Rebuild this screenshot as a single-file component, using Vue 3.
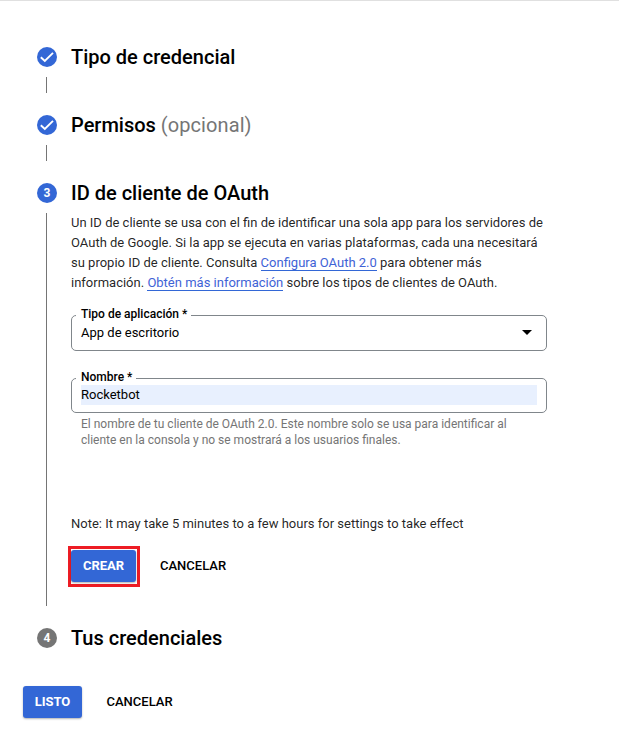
<script setup>
const doneSteps = [
  { title: 'Tipo de credencial', note: '' },
  { title: 'Permisos', note: '(opcional)' },
]
</script>

<template>
  <main class="page">
    <section v-for="step in doneSteps" :key="step.title" class="step">
      <header class="head">
        <svg class="mark" width="20" height="20" viewBox="0 0 20 20">
          <circle cx="10" cy="10" r="10" fill="#3367d6" />
          <path d="M3.8 10.2 L7.8 14 L16 5.8" fill="none" stroke="#fff" stroke-width="1.9" />
        </svg>
        <h2>{{ step.title }} <span v-if="step.note" class="optional">{{ step.note }}</span></h2>
      </header>
      <div class="connector"></div>
    </section>

    <section class="step">
      <header class="head">
        <span class="mark number">3</span>
        <h2>ID de cliente de OAuth</h2>
      </header>
      <div class="body">
        <p class="intro">
          Un ID de cliente se usa con el fin de identificar una sola app para los servidores de<br />
          OAuth de Google. Si la app se ejecuta en varias plataformas, cada una necesitará<br />
          su propio ID de cliente. Consulta <a>Configura OAuth 2.0</a> para obtener más<br />
          información. <a>Obtén más información</a> sobre los tipos de clientes de OAuth.
        </p>
        <div class="field select">
          <label class="type-label">Tipo de aplicación *</label>
          <span class="value">App de escritorio</span>
          <svg class="arrow" width="10" height="5" viewBox="0 0 10 5"><path d="M0 0H10L5 5Z" /></svg>
        </div>
        <div class="field input">
          <label class="name-label">Nombre *</label>
          <span class="value filled">Rocketbot</span>
        </div>
        <p class="hint">
          El nombre de tu cliente de OAuth 2.0. Este nombre solo se usa para identificar al<br />
          cliente en la consola y no se mostrará a los usuarios finales.
        </p>
        <p class="note">Note: It may take 5 minutes to a few hours for settings to take effect</p>
        <div class="actions">
          <div class="highlight"><button class="primary create">CREAR</button></div>
          <button class="plain">CANCELAR</button>
        </div>
      </div>
    </section>

    <section class="last">
      <header class="head">
        <span class="mark number pending">4</span>
        <h2>Tus credenciales</h2>
      </header>
    </section>

    <footer class="footer">
      <button class="primary done">LISTO</button>
      <button class="plain">CANCELAR</button>
    </footer>
  </main>
</template>

<style>
body {
  background: #fff;
}
</style>

<style scoped>
.page {
  box-sizing: border-box;
  height: 749px;
  overflow: hidden;
  padding: 46px 0 0 37px;
  border-top: 1px solid #e0e0e0;
  background: #fff;
  color: rgba(0, 0, 0, 0.87);
  font: 13px/20px Roboto, sans-serif;
}
p,
h2 {
  margin: 0;
}
.head {
  display: flex;
  height: 20px;
  align-items: center;
}
.mark {
  flex: none;
  width: 20px;
  height: 20px;
  margin-right: 14px;
}
.number {
  border-radius: 50%;
  background: #3367d6;
  color: #fff;
  font-size: 12px;
  font-weight: 700;
  line-height: 20px;
  text-align: center;
}
.pending {
  background: #757575;
}
h2 {
  color: #000;
  font-size: 20px;
  font-weight: 500;
  line-height: 24px;
  white-space: nowrap;
}
.optional {
  color: #757575;
  font-weight: 400;
  letter-spacing: 0.08px;
}
.connector {
  width: 1px;
  height: 16px;
  margin: 10px 0 22px 9px;
  background: #757575;
}
.body {
  box-sizing: border-box;
  height: 393px;
  margin: 10px 0 22px 9px;
  padding-left: 24px;
  border-left: 1px solid #757575;
}
.intro {
  white-space: nowrap;
}
a {
  border-bottom: 1px solid #3367d6;
  color: #3f63d6;
}
.field {
  position: relative;
  box-sizing: border-box;
  display: flex;
  width: 476px;
  border: 1px solid #80868b;
  border-radius: 5px;
  color: #000;
}
.select {
  height: 36px;
  margin-top: 22px;
  padding: 7px 14px 0 9px;
  justify-content: space-between;
}
.input {
  height: 35px;
  margin-top: 27px;
  padding: 6px 9px 0;
}
label {
  position: absolute;
  top: -10px;
  left: 4px;
  box-sizing: border-box;
  padding-left: 5px;
  background: #fff;
  font-size: 12px;
  font-weight: 500;
  line-height: 16px;
  white-space: nowrap;
}
.type-label {
  width: 115px;
}
.name-label {
  width: 60px;
}
.value {
  height: 20px;
  line-height: 20px;
}
.filled {
  flex: 1;
  background: #e8f0fe;
}
.arrow {
  margin-top: 7px;
}
.hint {
  margin: 3px 0 0 10px;
  color: #757575;
  font-size: 12px;
  line-height: 16px;
  white-space: nowrap;
}
.note {
  margin-top: 66px;
}
.actions {
  display: flex;
  align-items: flex-start;
  margin: 12px 0 0 -3px;
}
.highlight {
  box-sizing: border-box;
  width: 72px;
  height: 41px;
  border: 3px solid #ed1c24;
  padding-top: 1px;
}
button {
  height: 32px;
  border: 0;
  padding: 0;
  background: none;
  font: 500 13px/32px Roboto, sans-serif;
  color: #000;
}
.primary {
  display: block;
  border-radius: 3px;
  background: #3367d6;
  color: #fff;
  font-weight: 700;
  box-shadow: 0 1px 2px rgba(0, 0, 0, 0.3);
}
.create {
  width: 65px;
}
.done {
  width: 59px;
}
.actions .plain {
  margin: 4px 0 0 20px;
}
.footer {
  display: flex;
  margin: 38px 0 0 -14px;
}
.footer .plain {
  margin-left: 24.5px;
}
</style>
